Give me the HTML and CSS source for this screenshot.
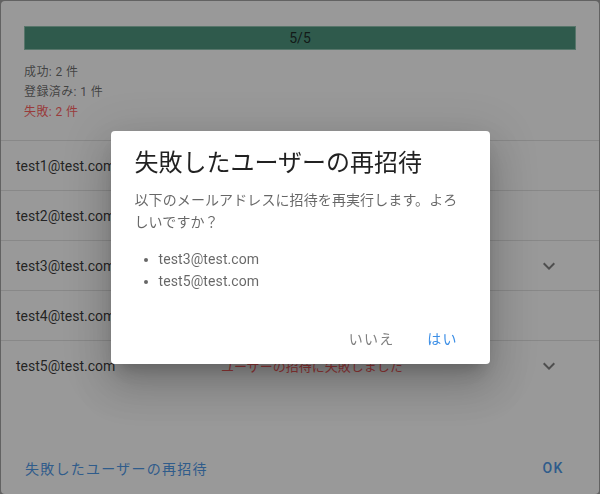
FILE: index.html
```html
<!DOCTYPE html>
<html lang="ja">
<head>
<meta charset="utf-8">
<title>招待結果</title>
<link rel="stylesheet" href="styles.css">
</head>
<body>
<div class="card">
  <div class="card-body">
    <div class="progress"><span>5/5</span></div>
    <div class="stats">
      <div>成功: 2 件</div>
      <div>登録済み: 1 件</div>
      <div class="err">失敗: 2 件</div>
    </div>
  </div>
  <div class="rows">
    <div class="row"><span class="email">test1@test.com</span><span></span><span></span></div>
    <div class="row"><span class="email">test2@test.com</span><span></span><span></span></div>
    <div class="row"><span class="email">test3@test.com</span><span></span>
      <svg class="chev" viewBox="0 0 24 24"><path d="M7.41,8.58L12,13.17L16.59,8.58L18,10L12,16L6,10L7.41,8.58Z"/></svg></div>
    <div class="row"><span class="email">test4@test.com</span><span></span><span></span></div>
    <div class="row"><span class="email">test5@test.com</span><span class="status err">ユーザーの招待に失敗しました</span>
      <svg class="chev" viewBox="0 0 24 24"><path d="M7.41,8.58L12,13.17L16.59,8.58L18,10L12,16L6,10L7.41,8.58Z"/></svg></div>
  </div>
  <div class="card-actions">
    <button class="btn primary">失敗したユーザーの再招待</button>
    <button class="btn primary latin">OK</button>
  </div>
</div>
<div class="scrim"></div>
<div class="dialog-layer">
  <div class="dialog">
    <div class="dialog-title">失敗したユーザーの再招待</div>
    <div class="dialog-text">
      <p>以下のメールアドレスに招待を再実行します。よろしいですか？</p>
      <ul>
        <li>test3@test.com</li>
        <li>test5@test.com</li>
      </ul>
    </div>
    <div class="dialog-actions">
      <button class="btn muted">いいえ</button>
      <button class="btn primary">はい</button>
    </div>
  </div>
</div>
</body>
</html>
```
FILE: styles.css
```css
html, body {
  margin: 0;
  padding: 0;
}
body {
  width: 600px;
  height: 494px;
  overflow: hidden;
  background: #9a9a9a;
  font-family: Roboto, "Noto Sans CJK JP", sans-serif;
}
.card {
  margin: 1px 1px 0 1px;
  width: 598px;
  height: 493px;
  background: #fff;
  border-radius: 4px;
  display: flex;
  flex-direction: column;
  box-sizing: border-box;
}
.card-body {
  padding: 25px 23px 0;
}
.progress {
  height: 24px;
  box-sizing: border-box;
  background: #3b8b72;
  border: 1px solid #86bca9;
  display: flex;
  align-items: center;
  justify-content: center;
  font-size: 14px;
  color: rgba(0,0,0,.87);
}
.stats {
  margin-top: 12px;
  font-size: 12px;
  line-height: 20px;
  letter-spacing: .4px;
  color: rgba(0,0,0,.65);
}
.err {
  color: #ff5252;
}
.rows {
  margin-top: 18px;
}
.row {
  height: 50px;
  box-sizing: border-box;
  border-top: 1px solid rgba(0,0,0,.12);
  display: grid;
  grid-template-columns: 205px 1fr 24px;
  align-items: center;
  padding: 0 38px 0 15px;
}
.email {
  font-size: 14px;
  color: rgba(0,0,0,.87);
}
.status {
  font-size: 13px;
  letter-spacing: 0;
}
.chev {
  width: 24px;
  height: 24px;
  fill: rgba(0,0,0,.54);
}
.card-actions {
  margin-top: auto;
  display: flex;
  justify-content: space-between;
  padding: 8px 14px 8px 8px;
}
.btn {
  height: 36px;
  min-width: 64px;
  padding: 0 16px;
  border: 0;
  background: none;
  font-family: Roboto, "Noto Sans CJK JP", sans-serif;
  font-size: 14px;
  font-weight: 400;
  letter-spacing: 1.25px;
  cursor: pointer;
}
.btn.latin {
  font-weight: 500;
}
.btn.primary {
  color: #3b8ee6;
}
.btn.muted {
  color: #808080;
}
.scrim {
  position: fixed;
  inset: 0;
  background: rgba(33,33,33,.46);
}
.dialog-layer {
  position: fixed;
  inset: 0;
  display: flex;
  align-items: center;
  justify-content: center;
}
.dialog {
  width: 379px;
  background: #fff;
  border-radius: 4px;
  box-shadow: 0 11px 15px -7px rgba(0,0,0,.2), 0 24px 38px 3px rgba(0,0,0,.14), 0 9px 46px 8px rgba(0,0,0,.12);
}
.dialog-title {
  padding: 16px 24px 10px;
  font-size: 24px;
  line-height: 32px;
  color: rgba(0,0,0,.87);
}
.dialog-text {
  padding: 0 24px 20px;
  font-size: 14px;
  line-height: 22px;
  letter-spacing: .1px;
  color: rgba(0,0,0,.6);
}
.dialog-text p {
  margin: 0 0 15px;
}
.dialog-text ul {
  margin: 0;
  padding-left: 24px;
}
.dialog-actions {
  display: flex;
  justify-content: flex-end;
  padding: 8px 15px 8px 8px;
}
```
